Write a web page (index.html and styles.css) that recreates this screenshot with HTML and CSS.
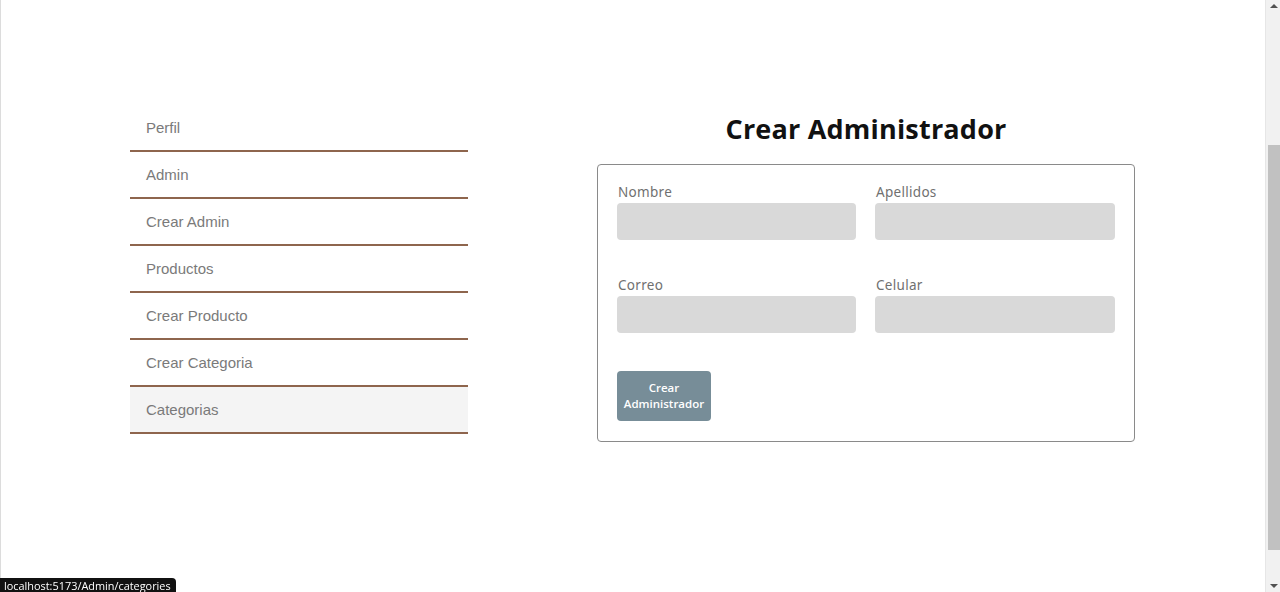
FILE: index.html
```html
<!DOCTYPE html>
<html lang="es">
<head>
<meta charset="utf-8">
<title>Crear Administrador</title>
<link rel="stylesheet" href="styles.css">
</head>
<body>
<div class="page">
  <div class="layout">
    <nav class="sidebar">
      <a class="nav-item" href="#">Perfil</a>
      <a class="nav-item" href="#">Admin</a>
      <a class="nav-item" href="#">Crear Admin</a>
      <a class="nav-item" href="#">Productos</a>
      <a class="nav-item" href="#">Crear Producto</a>
      <a class="nav-item" href="#">Crear Categoria</a>
      <a class="nav-item is-hover" href="#">Categorias</a>
    </nav>
    <main class="main">
      <h1 class="title">Crear Administrador</h1>
      <form class="card">
        <div class="fields">
          <label class="field"><span class="field-label">Nombre</span><input class="field-input" type="text"></label>
          <label class="field"><span class="field-label">Apellidos</span><input class="field-input" type="text"></label>
          <label class="field"><span class="field-label">Correo</span><input class="field-input" type="text"></label>
          <label class="field"><span class="field-label">Celular</span><input class="field-input" type="text"></label>
        </div>
        <button class="btn" type="button">Crear Administrador</button>
      </form>
    </main>
  </div>
</div>
<div class="scrollbar">
  <span class="arrow arrow-up"></span>
  <span class="thumb"></span>
  <span class="arrow arrow-down"></span>
</div>
<div class="statusbar">localhost:5173/Admin/categories</div>
</body>
</html>
```
FILE: styles.css
```css
html, body {
  margin: 0;
  padding: 0;
  height: 100%;
  overflow: hidden;
  background: #ffffff;
}
.page {
  height: 592px;
  width: 1265px;
  box-sizing: border-box;
  border-left: 1px solid #dcdcdc;
  padding-top: 105px;
}
.layout {
  display: grid;
  grid-template-columns: 338px 538px;
  column-gap: 129px;
  width: 1005px;
  margin-left: 129px;
  align-items: start;
}
.sidebar {
  display: flex;
  flex-direction: column;
}
.nav-item {
  display: block;
  height: 45px;
  line-height: 45px;
  padding-left: 16px;
  border-bottom: 2px solid #8e654d;
  font-family: "Liberation Sans", Arial, sans-serif;
  font-size: 15px;
  color: #7a7a7a;
  text-decoration: none;
}
.nav-item.is-hover {
  background: #f4f4f4;
}
.main {
  display: flex;
  flex-direction: column;
  padding-top: 7px;
}
.title {
  margin: 0 0 18px 0;
  height: 34px;
  line-height: 34px;
  text-align: center;
  font-family: "Open Sans", sans-serif;
  font-weight: 700;
  font-size: 27px;
  letter-spacing: 0.2px;
  color: #111111;
}
.card {
  margin: 0;
  border: 1px solid #8a8a8a;
  border-radius: 4px;
  padding: 18px 19px 20px 19px;
  display: flex;
  flex-direction: column;
  align-items: flex-start;
}
.fields {
  display: grid;
  grid-template-columns: 239px 240px;
  column-gap: 19px;
  row-gap: 36px;
  width: 100%;
}
.field {
  display: flex;
  flex-direction: column;
  gap: 2px;
}
.field-label {
  font-family: "Noto Sans", sans-serif;
  font-size: 13.5px;
  line-height: 18px;
  color: #707070;
  letter-spacing: 0.3px;
  padding-left: 1px;
}
.field-input {
  box-sizing: border-box;
  height: 37px;
  width: 100%;
  border: none;
  border-radius: 4px;
  background: #d9d9d9;
  margin: 0;
}
.btn {
  margin-top: 38px;
  width: 94px;
  height: 50px;
  border: none;
  border-radius: 4px;
  background: #778d98;
  color: #ffffff;
  font-family: "Open Sans", sans-serif;
  font-weight: 600;
  font-size: 11.5px;
  line-height: 16px;
  padding: 0 4px 0 4px;
  text-align: center;
}
.scrollbar {
  position: fixed;
  top: 0;
  right: 0;
  width: 15px;
  height: 592px;
  background: #f1f1f1;
  border-left: 1px solid #e6e6e6;
  box-sizing: border-box;
}
.thumb {
  position: absolute;
  left: 2px;
  top: 145px;
  width: 12px;
  height: 405px;
  background: #c1c1c1;
}
.arrow {
  position: absolute;
  left: 4px;
  width: 0;
  height: 0;
  border-left: 4px solid transparent;
  border-right: 4px solid transparent;
}
.arrow-up {
  top: 4px;
  border-bottom: 4px solid #505050;
}
.arrow-down {
  bottom: 4px;
  border-top: 4px solid #505050;
}
.statusbar {
  position: fixed;
  left: 0;
  bottom: 0;
  height: 14px;
  line-height: 15px;
  padding: 0 5px 0 4px;
  background: #111111;
  color: #ffffff;
  border-top-right-radius: 4px;
  font-family: "Open Sans", sans-serif;
  font-size: 10.9px;
  letter-spacing: 0;
}
```
